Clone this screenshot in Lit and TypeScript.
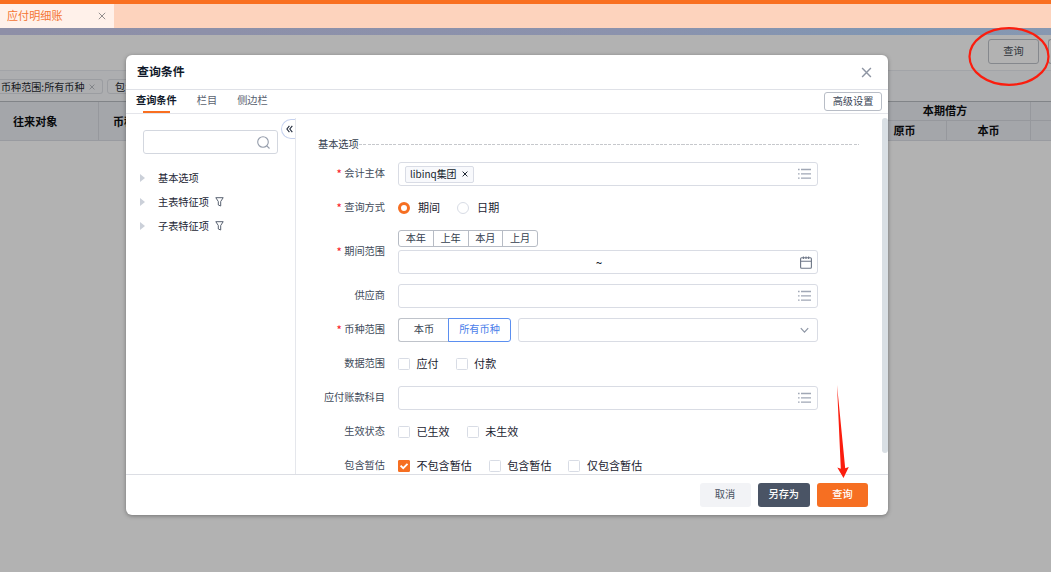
import { LitElement, html, css, svg } from "lit";
import { customElement, property } from "lit/decorators.js";
import { classMap } from "lit/directives/class-map.js";

const cross = (size: number, width = 1) => html`<svg width=${size} height=${size} viewBox="0 0 10 10" fill="none" stroke="currentColor" stroke-width=${width}><path d="M1 1l8 8M9 1l-8 8" /></svg>`;

const icons: Record<string, unknown> = {
  list: html`<svg width="13" height="12" viewBox="0 0 13 12" fill="none" stroke="#a0a7b5" stroke-width="1.3">${svg`<path d="M0 1.5h1.6M3 1.5h10M0 5.8h1.6M3 5.8h10M0 10.2h1.6M3 10.2h10" />`}</svg>`,
  calendar: html`<svg class="cal" width="12" height="13" viewBox="0 0 12 13" fill="none" stroke="#6d7686" stroke-width="1.1"><rect x=".6" y="1.8" width="10.8" height="10.5" rx="1" /><path d="M.5 5.2h11M3.4 .4v2.6M6 .4v2.6M8.6 .4v2.6" /></svg>`,
  down: html`<svg class="down" width="9" height="7" viewBox="0 0 9 7" fill="none" stroke="#8e96a5" stroke-width="1.2"><path d="M.8 1.2l3.7 4 3.7-4" /></svg>`,
};

@customElement("form-field")
export class FormField extends LitElement {
  @property() icon = "list";
  static styles = css`
    :host { display: flex; flex: 1; box-sizing: border-box; height: 24px; border: 1px solid #d9dce4; border-radius: 3px; background: #fff; align-items: center; padding: 0 6px; }
    .content { flex: 1; display: flex; align-items: center; }
    svg { display: block; }
    .cal { margin-right: -1px; }
    .down { margin-right: 2px; }
  `;
  render() {
    return html`<div class="content"><slot></slot></div>${icons[this.icon]}`;
  }
}

@customElement("form-row")
export class FormRow extends LitElement {
  @property() label = "";
  @property({ type: Boolean }) required = false;
  static styles = css`
    :host { display: flex; align-items: center; min-height: 24px; }
    .label { display: flex; justify-content: flex-end; width: 67px; margin-right: 13px; padding-bottom: 2px; white-space: nowrap; color: #414b5a; line-height: 16px; }
    .star { color: #fa2a2e; margin-right: 2.5px; font-size: 11px; font-weight: 500; }
    .control { width: 420px; display: flex; align-items: center; }
  `;
  render() {
    return html`<div class="label">${this.required ? html`<span class="star">*</span>` : ""}${this.label}</div>
      <div class="control"><slot></slot></div>`;
  }
}

@customElement("choice-item")
export class ChoiceItem extends LitElement {
  @property() kind = "check";
  @property({ type: Boolean }) checked = false;
  static styles = css`
    :host { display: flex; align-items: center; font-size: 11.05px; color: #1c2432; white-space: nowrap; line-height: 16px; }
    .text { padding-bottom: 2px; }
    .mark { box-sizing: border-box; width: 12px; height: 12px; border: 1px solid #d8dce5; border-radius: 1.5px; margin-right: 6.5px; display: flex; align-items: center; justify-content: center; }
    .radio { border-radius: 50%; margin-right: 8px; }
    .on { background: #f66f22; border-color: #f66f22; border-radius: 1px; }
    .radio.on { background: #fff; border-width: 3.3px; border-radius: 50%; }
  `;
  render() {
    const radio = this.kind === "radio";
    return html`<span class=${classMap({ mark: true, radio, on: this.checked })}>
        ${this.checked && !radio ? html`<svg width="10" height="10" viewBox="0 0 10 10" fill="none" stroke="#fff" stroke-width="1.8"><path d="M1.6 4.6l2.6 2.6L8.5 2.8" /></svg>` : ""}
      </span><span class="text"><slot></slot></span>`;
  }
}

@customElement("app-root")
export class AppRoot extends LitElement {
  static styles = css`
    :host { display: block; position: relative; width: 1051px; height: 572px; overflow: hidden; background: #b2b2b2; font: 10.2px/16px "Noto Sans CJK SC", sans-serif; color: #343e4e; }
    * { box-sizing: border-box; }
    svg { display: block; flex: none; }
    .tabs { height: 28px; border-top: 4px solid #f96f20; background: #fdd3bd; display: flex; }
    .page-tab { width: 114px; background: #fff1ea; color: #f47533; font-size: 11.1px; display: flex; align-items: center; justify-content: space-between; padding: 0 8px 2px 7px; }
    .page-tab svg { color: #8e8a8a; margin-top: 1px; }
    .band { height: 7px; background: linear-gradient(90deg, #8e8fa7, #8b92ad 60%, #8096b3 85%, #8798b1); }
    .toolbar { height: 36px; border-bottom: 1px solid #a2a4a8; display: flex; justify-content: flex-end; align-items: flex-start; padding-top: 4px; gap: 9px; }
    .tool { width: 51px; height: 25px; border: 1px solid #85888d; border-radius: 3px; text-align: center; line-height: 22px; color: #30343b; }
    .tool.cut { width: 3px; border-right: 0; border-radius: 3px 0 0 3px; }
    .filters { height: 30px; background: #adaeb0; display: flex; gap: 4px; padding-top: 8px; white-space: nowrap; }
    .chip { height: 15px; border: 1px solid #9b9da1; border-radius: 3px; display: flex; align-items: center; justify-content: space-between; padding: 0 7px; color: #17191d; width: 120px; }
    .chip.first { width: 103px; border-left: 0; border-radius: 0 3px 3px 0; padding: 0 7px 0 1px; font-size: 10.1px; }
    .chip svg { color: #7d8085; }
    .thead { height: 40px; border-top: 1px solid #818488; border-bottom: 1px solid #999ba0; background: #a4a6aa; display: flex; font-weight: 700; font-size: 11.1px; color: #08090b; }
    .th { border-right: 1px solid #96989d; display: flex; align-items: center; padding-bottom: 1px; }
    .c1 { width: 99px; padding-left: 13px; }
    .c2 { width: 761px; padding-left: 14px; }
    .group { width: 171px; border-right: 1px solid #96989d; display: flex; flex-direction: column; }
    .g-title { height: 19px; line-height: 17px; border-bottom: 1px solid #96989d; text-align: center; }
    .g-cols { flex: 1; display: flex; }
    .g-cols > div { flex: 1; text-align: center; line-height: 19px; }
    .g-cols > div:first-child { border-right: 1px solid #96989d; padding-left: 3px; }
    .rest { flex: 1; height: 19px; border-bottom: 1px solid #96989d; }

    .modal { position: absolute; left: 126px; top: 55px; width: 762px; height: 460px; border-radius: 6px; background: #fff; box-shadow: 0 1px 4px rgba(0,0,0,.35); display: flex; flex-direction: column; overflow: hidden; }
    .head { height: 35px; border-bottom: 1px solid #dfe1e7; display: flex; align-items: center; justify-content: space-between; padding: 0 16px 2px 11px; font-size: 11.9px; font-weight: 700; color: #111a2b; }
    .head svg { color: #8e95a3; margin-top: 2px; }
    .nav { height: 24px; border-bottom: 1px solid #e4e5ea; display: flex; padding-left: 10px; color: #596270; }
    .nav-item { margin-right: 20px; line-height: 20px; height: 24px; }
    .nav-item.active { color: #111a2b; font-weight: 700; display: flex; flex-direction: column; align-items: center; }
    .nav-item.active::after { content: ""; width: 27px; height: 2px; margin-top: 1px; background: #f96f20; }
    .advanced { margin: 2px 6px 0 auto; width: 58px; height: 19px; border: 1px solid #b8bdc6; border-radius: 3px; text-align: center; line-height: 15px; color: #3b4555; }
    .body { flex: none; height: 361px; border-bottom: 1px solid #dcdee4; display: flex; overflow: hidden; }
    .side { width: 169px; padding: 16px 0 0 17px; }
    .search-line { display: flex; align-items: flex-start; height: 24px; }
    .search { width: 135px; height: 24px; border: 1px solid #d3d7df; border-radius: 3px; display: flex; align-items: center; justify-content: flex-end; padding-right: 7px; }
    .fold { width: 14px; height: 20px; margin: -11px 0 0 3px; border: 1px solid #c5d1ee; border-right: 0; border-radius: 10px 0 0 10px; display: flex; align-items: center; padding-left: 4px; }
    .tree { margin-top: 12px; color: #1d2635; }
    .node { height: 24px; display: flex; align-items: center; margin-left: -3px; padding-bottom: 1px; }
    .arrow { width: 0; height: 0; border: 4px solid transparent; border-left: 5px solid #cbd0d9; border-right: 0; margin: 1px 13px 0 0; }
    .node svg { margin-left: 6px; }
    .form { flex: 1; border-left: 1px solid #e5e7ec; margin-top: 4px; padding: 18px 0 0 22px; }
    .section { display: flex; align-items: center; height: 16px; width: 541px; color: #343e4e; line-height: 14px; padding-bottom: 1px; }
    .dash { flex: 1; height: 1px; margin-top: 2px; background: repeating-linear-gradient(90deg, #c6c8cc 0 3px, transparent 3px 4.3px); }
    .rows { margin-top: 10px; display: flex; flex-direction: column; gap: 10px; }
    .tag { height: 17px; border: 1px solid #d9dce5; border-radius: 2px; background: #f8f9fc; color: #151d2b; padding: 0 5px 1px 4px; display: flex; align-items: center; gap: 5px; font-size: 9.95px; }
    .tag svg { margin-top: 1px; }
    .stack { flex: 1; display: flex; flex-direction: column; gap: 3px; height: 44px; }
    .quick { display: flex; width: 140px; height: 17px; border: 1px solid #b7bcc5; border-radius: 3px; color: #343e4e; }
    .quick span { flex: 1; text-align: center; line-height: 14px; }
    .quick span + span { border-left: 1px solid #b7bcc5; }
    .tilde { flex: 1; text-align: center; color: #111a2b; padding-right: 7px; font-size: 11.5px; font-weight: 500; }
    .seg { width: 51px; height: 24px; border: 1px solid #bfc3ca; border-right: 0; border-radius: 3px 0 0 3px; text-align: center; line-height: 20px; }
    .seg.sel { width: 63px; margin: 0 7px 0 -1px; border: 1px solid #5b8ff0; border-radius: 0 3px 3px 0; color: #4b80ea; }
    .g17 { gap: 17px; }
    .choices { display: flex; }
    .bar { width: 6px; height: 335px; margin-top: 4px; background: #d9dfe4; border-radius: 3px; }
    .foot { flex: 1; display: flex; align-items: center; justify-content: flex-end; gap: 7px; padding-right: 20px; }
    .btn { height: 24px; width: 51px; border-radius: 3px; text-align: center; line-height: 22px; background: #f2f3f6; color: #475160; }
    .btn.dark { background: #4a5465; color: #fff; width: 52.5px; font-weight: 500; }
    .btn.primary { background: #f66f22; color: #fff; font-weight: 500; }
    .marks { position: absolute; inset: 0; }
  `;

  private funnel = html`<svg width="9" height="10" viewBox="0 0 9 10" fill="none" stroke="#586170" stroke-width="1"><path d="M.8 .7h7.4L5.7 4.5V9L3.3 8V4.5z" /></svg>`;

  render() {
    return html`
      <div class="tabs"><div class="page-tab">应付明细账${cross(8, 1.2)}</div></div>
      <div class="band"></div>
      <div class="toolbar"><div class="tool">查询</div><div class="tool cut"></div></div>
      <div class="filters">
        <div class="chip first">币种范围:所有币种${cross(6, 1.5)}</div>
        <div class="chip">包含暂估:不包含</div>
      </div>
      <div class="thead">
        <div class="th c1">往来对象</div>
        <div class="th c2">币种</div>
        <div class="group">
          <div class="g-title">本期借方</div>
          <div class="g-cols"><div>原币</div><div>本币</div></div>
        </div>
        <div class="rest"></div>
      </div>

      <div class="modal">
        <div class="head">查询条件${cross(11, 1.3)}</div>
        <div class="nav">
          <div class="nav-item active">查询条件</div>
          <div class="nav-item">栏目</div>
          <div class="nav-item">侧边栏</div>
          <div class="advanced">高级设置</div>
        </div>
        <div class="body">
          <div class="side">
            <div class="search-line">
              <div class="search"><svg width="13" height="13" viewBox="0 0 13 13" fill="none" stroke="#959dab" stroke-width="1.1"><circle cx="6" cy="6" r="5.3" /><path d="M9.8 9.8l2.7 2.7" /></svg></div>
              <div class="fold"><svg width="7" height="8" viewBox="0 0 7 8" fill="none" stroke="#222c3d" stroke-width="1.1"><path d="M3.4 .8L.9 4l2.5 3.2M6.3 .8L3.8 4l2.5 3.2" /></svg></div>
            </div>
            <div class="tree">
              <div class="node"><span class="arrow"></span>基本选项</div>
              <div class="node"><span class="arrow"></span>主表特征项${this.funnel}</div>
              <div class="node"><span class="arrow"></span>子表特征项${this.funnel}</div>
            </div>
          </div>
          <div class="form">
            <div class="section">基本选项<span class="dash"></span></div>
            <div class="rows">
              <form-row label="会计主体" required><form-field><span class="tag">libinq集团${cross(6, 1.6)}</span></form-field></form-row>
              <form-row label="查询方式" required>
                <div class="choices g17"><choice-item kind="radio" checked>期间</choice-item><choice-item kind="radio">日期</choice-item></div>
              </form-row>
              <form-row label="期间范围" required>
                <div class="stack">
                  <div class="quick"><span>本年</span><span>上年</span><span>本月</span><span>上月</span></div>
                  <form-field icon="calendar"><span class="tilde">~</span></form-field>
                </div>
              </form-row>
              <form-row label="供应商"><form-field></form-field></form-row>
              <form-row label="币种范围" required>
                <div class="seg">本币</div><div class="seg sel">所有币种</div>
                <form-field icon="down"></form-field>
              </form-row>
              <form-row label="数据范围"><div class="choices g17"><choice-item>应付</choice-item><choice-item>付款</choice-item></div></form-row>
              <form-row label="应付账款科目"><form-field></form-field></form-row>
              <form-row label="生效状态"><div class="choices g17"><choice-item>已生效</choice-item><choice-item>未生效</choice-item></div></form-row>
              <form-row label="包含暂估"><div class="choices g17"><choice-item checked>不包含暂估</choice-item><choice-item>包含暂估</choice-item><choice-item>仅包含暂估</choice-item></div></form-row>
            </div>
          </div>
          <div class="bar"></div>
        </div>
        <div class="foot">
          <div class="btn">取消</div><div class="btn dark">另存为</div><div class="btn primary">查询</div>
        </div>
      </div>

      <svg class="marks" width="1051" height="572" viewBox="0 0 1051 572">
        <ellipse cx="1009" cy="56.5" rx="39.5" ry="28.3" fill="none" stroke="#fb1d0e" stroke-width="2.2" />
        <path d="M837 385L840.8 468.8L837.3 467.5L843.5 478L848.8 467L845.2 468.2Z" fill="#fb1d0e" />
      </svg>
    `;
  }
}
